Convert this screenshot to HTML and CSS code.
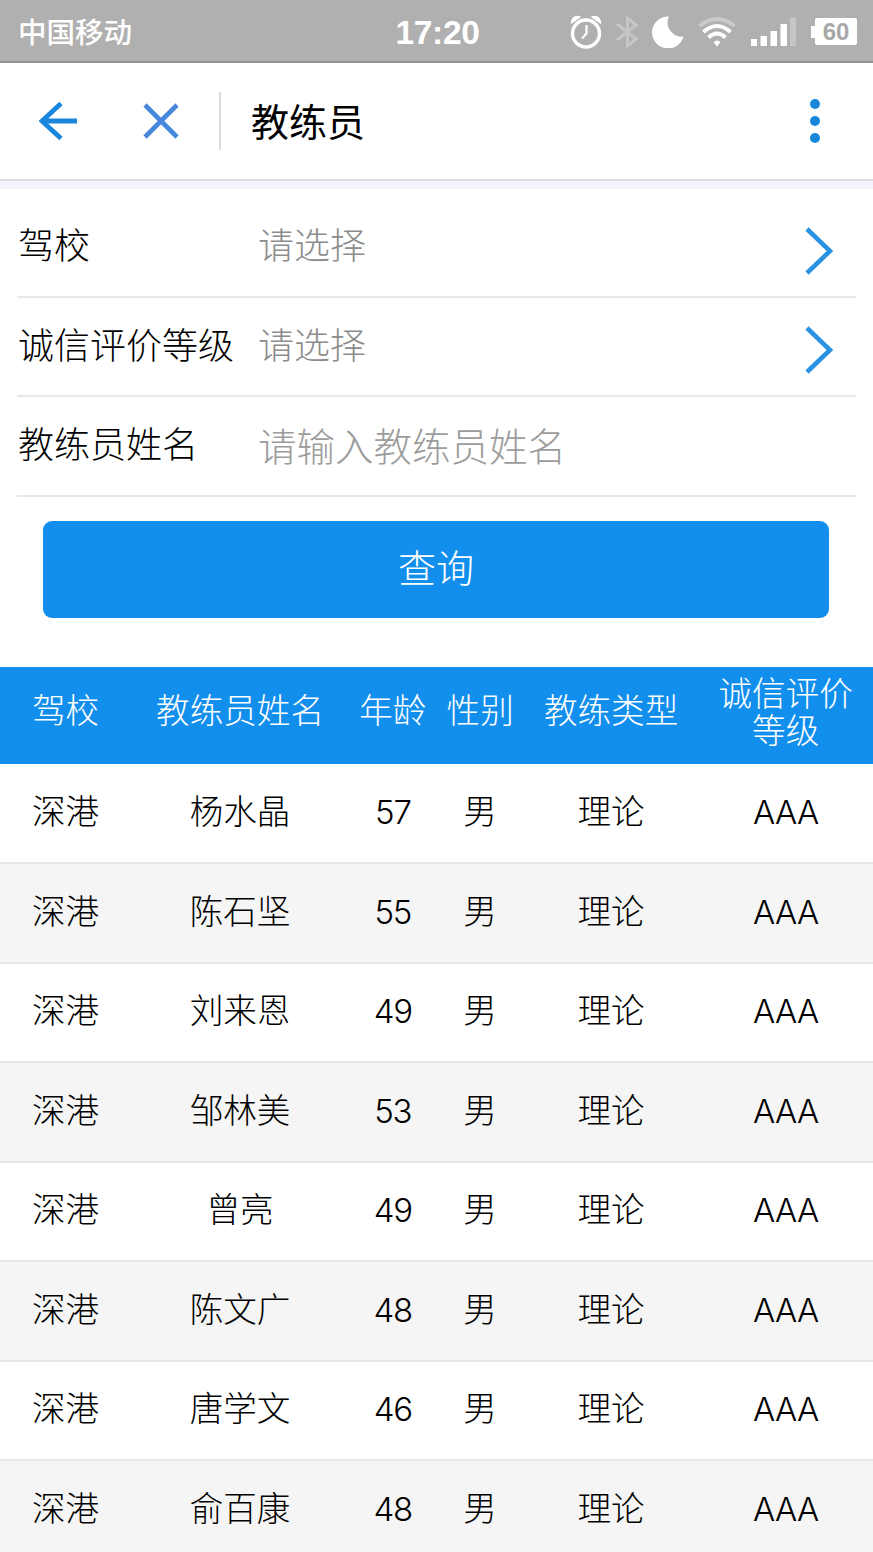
FILE: index.html
```html
<!DOCTYPE html>
<html lang="zh-CN">
<head>
  <meta charset="UTF-8">
  <meta name="viewport" content="width=device-width, initial-scale=1.0">
  <title>教练员</title>
  <link rel="stylesheet" href="styles.css">
</head>
<body>
  <div class="status-bar">
    <div class="carrier">中国移动</div>
    <div class="clock">17:20</div>
    <div class="status-icons">
      <svg class="icon-alarm" width="32" height="34" viewBox="0 0 32 34">
        <path d="M1.500 8 A6 6 0 0 1 10 2 Z M30.500 8 A6 6 0 0 0 22 2 Z" fill="#fff" stroke="#fff" stroke-width="1.500" stroke-linejoin="round"/>
        <circle cx="16" cy="18.500" r="13.500" fill="none" stroke="#fff" stroke-width="3.400"/>
        <path d="M16.500 10 V18.500 L12 23.500" fill="none" stroke="#fff" stroke-width="2.200"/>
      </svg>
      <svg class="icon-bluetooth" width="24" height="34" viewBox="0 0 24 34">
        <path d="M2 9 L21 24 L12.500 31 V3 L21 10 L2 25" fill="none" stroke="#c6c6c6" stroke-width="3"/>
      </svg>
      <svg class="icon-moon" width="32" height="32" viewBox="0 0 32 32">
        <path d="M17 0.500 A16 16 0 1 0 31.500 20.500 A14 14 0 0 1 17 0.500 Z" fill="#fff"/>
      </svg>
      <svg class="icon-wifi" width="38" height="30" viewBox="0 0 38 30">
        <path d="M1.500 9 Q19 -5 36.500 9" fill="none" stroke="#cacaca" stroke-width="4"/>
        <path d="M5.500 15 Q19 3 32.500 15" fill="none" stroke="#fff" stroke-width="4"/>
        <path d="M10.500 20.500 Q19 12.500 27.500 20.500" fill="none" stroke="#fff" stroke-width="4"/>
        <path d="M15.500 25 Q19 22 22.500 25 L19 29.500 Z" fill="#fff"/>
      </svg>
      <svg class="icon-signal" width="46" height="30" viewBox="0 0 46 30">
        <path d="M0 22 h6 v7 h-6 Z M9.500 19 h6.500 v10 h-6.500 Z M19.500 14 h6.500 v15 h-6.500 Z M29.500 7 h6.500 v22 h-6.500 Z" fill="#fff"/>
        <rect x="39" y="0.500" width="6" height="28.500" fill="#c6c6c6"/>
      </svg>
      <div class="battery">60</div>
    </div>
  </div>

  <div class="nav-bar">
    <svg class="icon-back" width="39" height="40" viewBox="0 0 39 40">
      <path d="M22 2.500 L3 20 L22 37.500 M3 20 H38" fill="none" stroke="#1a86dc" stroke-width="4.800"/>
    </svg>
    <svg class="icon-close" width="36" height="36" viewBox="0 0 36 36">
      <path d="M2 2 L34 34 M34 2 L2 34" fill="none" stroke="#4788dd" stroke-width="4.600"/>
    </svg>
    <div class="nav-title">教练员</div>
    <svg class="icon-more" width="12" height="46" viewBox="0 0 12 46">
      <circle cx="6" cy="6" r="5" fill="#1787dc"/>
      <circle cx="6" cy="23" r="5" fill="#1787dc"/>
      <circle cx="6" cy="40" r="5" fill="#1787dc"/>
    </svg>
  </div>

  <div class="search-form">
    <div class="form-row">
      <label>驾校</label>
      <span class="value">请选择</span>
      <svg class="chevron" width="30" height="48" viewBox="0 0 30 48">
        <path d="M3 2 L26 24 L3 46" fill="none" stroke="#2a92e2" stroke-width="4.500"/>
      </svg>
    </div>
    <div class="form-row">
      <label>诚信评价等级</label>
      <span class="value">请选择</span>
      <svg class="chevron" width="30" height="48" viewBox="0 0 30 48">
        <path d="M3 2 L26 24 L3 46" fill="none" stroke="#2a92e2" stroke-width="4.500"/>
      </svg>
    </div>
    <div class="form-row">
      <label>教练员姓名</label>
      <input type="text" placeholder="请输入教练员姓名">
    </div>
    <button class="query-btn">查询</button>
  </div>

  <table class="coach-table">
    <thead>
      <tr>
        <th class="w15">驾校</th>
        <th class="w25">教练员姓名</th>
        <th class="w10">年龄</th>
        <th class="w10">性别</th>
        <th class="w20">教练类型</th>
        <th class="w20 two-line">诚信评价等级</th>
      </tr>
    </thead>
    <tbody>
      <tr><td>深港</td><td>杨水晶</td><td class="age">57</td><td>男</td><td>理论</td><td class="grade">AAA</td></tr>
      <tr><td>深港</td><td>陈石坚</td><td class="age">55</td><td>男</td><td>理论</td><td class="grade">AAA</td></tr>
      <tr><td>深港</td><td>刘来恩</td><td class="age">49</td><td>男</td><td>理论</td><td class="grade">AAA</td></tr>
      <tr><td>深港</td><td>邹林美</td><td class="age">53</td><td>男</td><td>理论</td><td class="grade">AAA</td></tr>
      <tr><td>深港</td><td>曾亮</td><td class="age">49</td><td>男</td><td>理论</td><td class="grade">AAA</td></tr>
      <tr><td>深港</td><td>陈文广</td><td class="age">48</td><td>男</td><td>理论</td><td class="grade">AAA</td></tr>
      <tr><td>深港</td><td>唐学文</td><td class="age">46</td><td>男</td><td>理论</td><td class="grade">AAA</td></tr>
      <tr><td>深港</td><td>俞百康</td><td class="age">48</td><td>男</td><td>理论</td><td class="grade">AAA</td></tr>
    </tbody>
  </table>
</body>
</html>
```
FILE: styles.css
```css
* {
  box-sizing: border-box;
}

body {
  font-family: 'Noto Sans CJK SC', sans-serif;
  font-weight: 300;
  margin: 0;
  height: 1552px;
  overflow: hidden;
  background: #fff;
  color: #000;
}

/* Phone status bar */
.status-bar {
  display: grid;
  grid-template-columns: 1fr auto 1fr;
  align-items: center;
  height: 63px;
  padding: 0 16px 0 18px;
  background: #b0b0b0;
  border-bottom: 2px solid #929292;
  color: #fff;
}

.carrier {
  font-size: 28.5px;
  font-weight: 500;
  line-height: 40px;
}

.clock {
  font-family: 'Liberation Sans', sans-serif;
  font-size: 33.5px;
  font-weight: bold;
  letter-spacing: -0.3px;
  line-height: 40px;
  padding-top: 5px;
}

.status-icons {
  display: flex;
  align-items: center;
  justify-content: flex-end;
  padding-top: 2px;
}

.icon-bluetooth {
  margin-left: 13px;
}

.icon-moon {
  margin-left: 13px;
}

.icon-wifi {
  margin-left: 14px;
}

.icon-signal {
  margin-left: 15px;
}

.battery {
  position: relative;
  width: 42px;
  height: 27px;
  margin-left: 18px;
  background: #fff;
  border-radius: 2px;
  color: #a8a8a8;
  font-family: 'Liberation Sans', sans-serif;
  font-size: 24px;
  font-weight: bold;
  line-height: 28px;
  text-align: center;
}

.battery::before {
  content: '';
  position: absolute;
  left: -4px;
  top: 8px;
  width: 4px;
  height: 12px;
  background: #fff;
}

/* Top navigation */
.nav-bar {
  display: flex;
  align-items: center;
  height: 126px;
  padding: 0 52px 10px 39px;
  background: linear-gradient(#fff 116px, #dedee2 116px, #dedee2 118px, #f4f4fa 118px);
}

.icon-close {
  margin-left: 65px;
}

.nav-title {
  flex: 1;
  height: 58px;
  margin-left: 40px;
  padding-left: 30px;
  border-left: 2px solid #dcdcdc;
  font-size: 38px;
  font-weight: 400;
  line-height: 55px;
}

/* Search form */
.search-form {
  padding: 9px 17px 49px;
}

.form-row {
  display: flex;
  align-items: center;
  height: 99.5px;
  padding: 0 22px 0 1px;
  border-bottom: 2px solid #e8e8e8;
  font-size: 36px;
}

.form-row label {
  width: 240px;
  padding-bottom: 7px;
  white-space: nowrap;
}

.form-row .value {
  flex: 1;
  padding-bottom: 7px;
  color: #8c8c8c;
}

.form-row .chevron {
  margin-top: 8px;
}

.form-row input {
  flex: 1;
  padding: 0 0 3px;
  border: none;
  outline: none;
  background: none;
  font: inherit;
  font-size: 38.5px;
}

.form-row input::placeholder {
  color: #9c9c9c;
}

.query-btn {
  display: block;
  width: 786px;
  height: 97px;
  margin: 24px 0 0 26px;
  padding: 0 0 8px;
  border: none;
  border-radius: 9px;
  background: #128eed;
  color: #fff;
  font: inherit;
  font-size: 38px;
}

/* Coach list */
.coach-table {
  width: 100%;
  table-layout: fixed;
  border-collapse: separate;
  border-spacing: 0;
  font-size: 33.6px;
  text-align: center;
}

.coach-table th {
  height: 98px;
  padding: 0 0 14px;
  background: #128eed;
  border-bottom: 1px solid #fff;
  color: #fff;
  font-weight: 300;
  line-height: 37px;
  white-space: nowrap;
}

.coach-table .two-line {
  padding: 0 19px 11px;
  white-space: normal;
}

.coach-table td {
  height: 99.5px;
  padding: 0 0 6px;
  border-bottom: 2px solid #e6e6e6;
  line-height: 40px;
}

.coach-table .age,
.coach-table .grade {
  padding-bottom: 2px;
  font-family: Inter, sans-serif;
  font-size: 33px;
  font-weight: 300;
}

.coach-table .age {
  letter-spacing: -1.2px;
}

.coach-table .grade {
  letter-spacing: -0.8px;
}

.coach-table tbody tr:nth-child(even) {
  background: #f5f5f5;
}

.w10 {
  width: 10%;
}

.w15 {
  width: 15%;
}

.w20 {
  width: 20%;
}

.w25 {
  width: 25%;
}
```
